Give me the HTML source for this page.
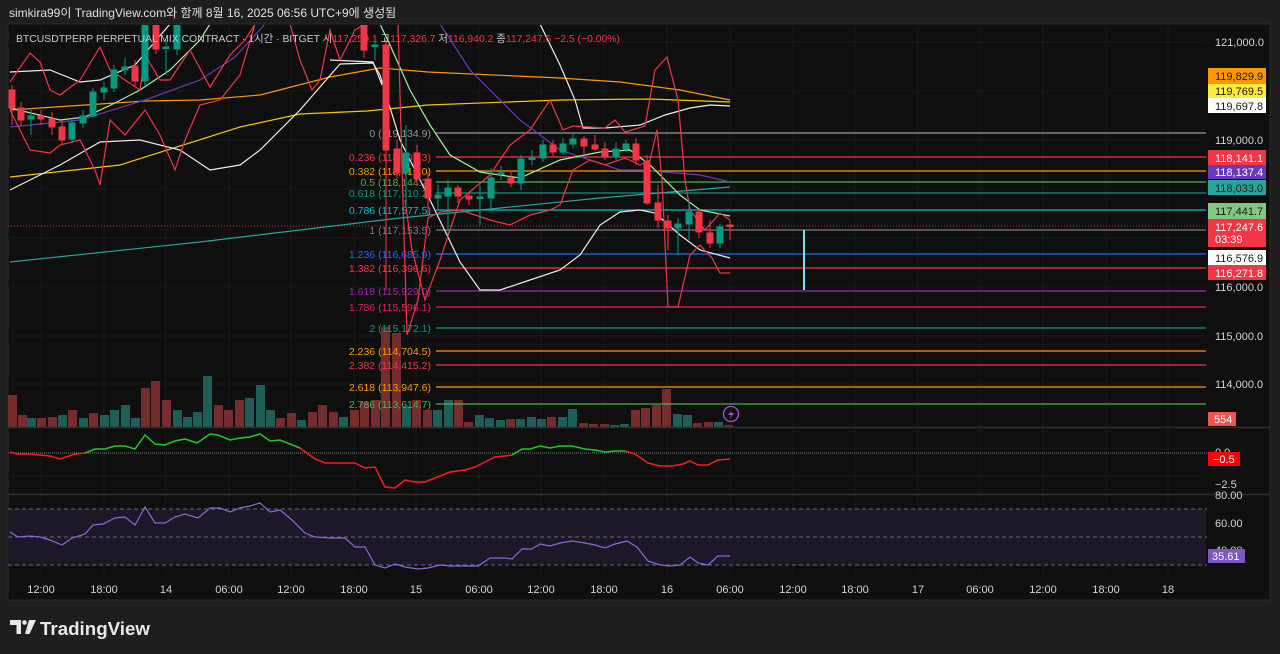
<!DOCTYPE html>
<html><head><meta charset="utf-8"><style>
html,body{margin:0;padding:0;background:#1e1e1e;width:1280px;height:654px;overflow:hidden;font-family:"Liberation Sans","Noto Sans CJK KR",sans-serif}
svg{position:absolute;left:0;top:0}
</style></head><body>
<svg width="1280" height="654" viewBox="0 0 1280 654" font-family="Liberation Sans, Noto Sans CJK KR, sans-serif">
<rect width="1280" height="654" fill="#1e1e1e"/>
<text x="9" y="17" fill="#e0e0e0" font-size="12">simkira99이 TradingView.com와 함께 8월 16, 2025 06:56 UTC+9에 생성됨</text>
<rect x="8" y="24" width="1262" height="576" fill="#0f0f0f" stroke="#2a2a2a"/>
<g stroke="#1a1a1a" stroke-width="1">
<line x1="8" y1="42" x2="1205" y2="42"/><line x1="8" y1="91" x2="1205" y2="91"/><line x1="8" y1="140" x2="1205" y2="140"/><line x1="8" y1="189" x2="1205" y2="189"/><line x1="8" y1="238" x2="1205" y2="238"/><line x1="8" y1="287" x2="1205" y2="287"/><line x1="8" y1="336" x2="1205" y2="336"/><line x1="8" y1="384" x2="1205" y2="384"/>
<line x1="8" y1="476" x2="1205" y2="476"/><line x1="8" y1="523" x2="1205" y2="523"/><line x1="8" y1="550" x2="1205" y2="550"/>
<line x1="41" y1="24" x2="41" y2="575"/><line x1="104" y1="24" x2="104" y2="575"/><line x1="166" y1="24" x2="166" y2="575"/><line x1="229" y1="24" x2="229" y2="575"/><line x1="291" y1="24" x2="291" y2="575"/><line x1="354" y1="24" x2="354" y2="575"/><line x1="416" y1="24" x2="416" y2="575"/><line x1="479" y1="24" x2="479" y2="575"/><line x1="541" y1="24" x2="541" y2="575"/><line x1="604" y1="24" x2="604" y2="575"/><line x1="667" y1="24" x2="667" y2="575"/><line x1="730" y1="24" x2="730" y2="575"/><line x1="793" y1="24" x2="793" y2="575"/><line x1="855" y1="24" x2="855" y2="575"/><line x1="918" y1="24" x2="918" y2="575"/><line x1="980" y1="24" x2="980" y2="575"/><line x1="1043" y1="24" x2="1043" y2="575"/><line x1="1106" y1="24" x2="1106" y2="575"/><line x1="1168" y1="24" x2="1168" y2="575"/>
</g>
<defs><clipPath id="main"><rect x="8" y="25" width="1198" height="402"/></clipPath></defs>
<g clip-path="url(#main)">
<g fill="#7a2e2e" opacity="0.95">
<rect x="8" y="395" width="9" height="32"/><rect x="18" y="415" width="9" height="12"/><rect x="37" y="418" width="9" height="9"/><rect x="48" y="417" width="9" height="10"/><rect x="68" y="410" width="9" height="17"/><rect x="89" y="413" width="9" height="14"/><rect x="141" y="388" width="9" height="39"/><rect x="151" y="381" width="9" height="46"/><rect x="162" y="400" width="9" height="27"/><rect x="214" y="405" width="9" height="22"/><rect x="224" y="410" width="9" height="17"/><rect x="235" y="400" width="9" height="27"/><rect x="276" y="418" width="9" height="9"/><rect x="287" y="413" width="9" height="14"/><rect x="308" y="412" width="9" height="15"/><rect x="318" y="405" width="9" height="22"/><rect x="329" y="412" width="9" height="15"/><rect x="350" y="410" width="9" height="17"/><rect x="360" y="402" width="9" height="25"/><rect x="371" y="400" width="9" height="27"/><rect x="381" y="327" width="9" height="100"/><rect x="392" y="333" width="9" height="94"/><rect x="412" y="400" width="9" height="27"/><rect x="423" y="410" width="9" height="17"/><rect x="454" y="400" width="9" height="27"/><rect x="464" y="422" width="9" height="5"/><rect x="506" y="419" width="9" height="8"/><rect x="547" y="417" width="9" height="10"/><rect x="579" y="423" width="9" height="4"/><rect x="589" y="424" width="9" height="3"/><rect x="600" y="424" width="9" height="3"/><rect x="631" y="410" width="9" height="17"/><rect x="641" y="408" width="9" height="19"/><rect x="652" y="405" width="9" height="22"/><rect x="662" y="389" width="9" height="38"/><rect x="693" y="423" width="9" height="4"/><rect x="704" y="422" width="9" height="5"/><rect x="724" y="425" width="9" height="2"/>
</g>
<g fill="#1d5e58">
<rect x="27" y="418" width="9" height="9"/><rect x="58" y="415" width="9" height="12"/><rect x="79" y="418" width="9" height="9"/><rect x="100" y="415" width="9" height="12"/><rect x="110" y="410" width="9" height="17"/><rect x="121" y="405" width="9" height="22"/><rect x="131" y="418" width="9" height="9"/><rect x="173" y="410" width="9" height="17"/><rect x="183" y="417" width="9" height="10"/><rect x="193" y="412" width="9" height="15"/><rect x="203" y="376" width="9" height="51"/><rect x="245" y="398" width="9" height="29"/><rect x="256" y="385" width="9" height="42"/><rect x="266" y="410" width="9" height="17"/><rect x="297" y="420" width="9" height="7"/><rect x="339" y="417" width="9" height="10"/><rect x="402" y="406" width="9" height="21"/><rect x="433" y="410" width="9" height="17"/><rect x="444" y="400" width="9" height="27"/><rect x="475" y="415" width="9" height="12"/><rect x="485" y="418" width="9" height="9"/><rect x="496" y="420" width="9" height="7"/><rect x="516" y="419" width="9" height="8"/><rect x="527" y="417" width="9" height="10"/><rect x="537" y="419" width="9" height="8"/><rect x="558" y="417" width="9" height="10"/><rect x="568" y="409" width="9" height="18"/><rect x="610" y="425" width="9" height="2"/><rect x="620" y="424" width="9" height="3"/><rect x="673" y="414" width="9" height="13"/><rect x="683" y="415" width="9" height="12"/><rect x="714" y="422" width="9" height="5"/>
</g>
<g stroke-width="1.3">
<line x1="436" y1="133" x2="1207" y2="133" stroke="#9598a1"/>
<line x1="436" y1="157" x2="1207" y2="157" stroke="#f23645"/>
<line x1="436" y1="171" x2="1207" y2="171" stroke="#ff9800"/>
<line x1="436" y1="182" x2="1207" y2="182" stroke="#4caf50"/>
<line x1="436" y1="193" x2="1207" y2="193" stroke="#089981"/>
<line x1="436" y1="210" x2="1207" y2="210" stroke="#00bcd4"/>
<line x1="436" y1="230" x2="1207" y2="230" stroke="#787b86"/>
<line x1="436" y1="254" x2="1207" y2="254" stroke="#2962ff"/>
<line x1="436" y1="268" x2="1207" y2="268" stroke="#f23645"/>
<line x1="436" y1="291" x2="1207" y2="291" stroke="#9c27b0"/>
<line x1="436" y1="307" x2="1207" y2="307" stroke="#e91e63"/>
<line x1="436" y1="328" x2="1207" y2="328" stroke="#089981"/>
<line x1="436" y1="351" x2="1207" y2="351" stroke="#ff9800"/>
<line x1="436" y1="365" x2="1207" y2="365" stroke="#f23645"/>
<line x1="436" y1="387" x2="1207" y2="387" stroke="#ff9800"/>
<line x1="436" y1="404" x2="1207" y2="404" stroke="#4caf50"/>
</g>
<g font-size="10.5" text-anchor="end">
<text x="431" y="137" fill="#9598a1">0 (119,134.9)</text>
<text x="431" y="161" fill="#f23645">0.236 (118,693.3)</text>
<text x="431" y="175" fill="#ff9800">0.382 (118,419.0)</text>
<text x="431" y="186" fill="#4caf50">0.5 (118,144.2)</text>
<text x="431" y="197" fill="#089981">0.618 (117,910.2)</text>
<text x="431" y="214" fill="#00bcd4">0.786 (117,577.5)</text>
<text x="431" y="234" fill="#787b86">1 (117,153.5)</text>
<text x="431" y="258" fill="#2962ff">1.236 (116,685.9)</text>
<text x="431" y="272" fill="#f23645">1.382 (116,396.6)</text>
<text x="431" y="295" fill="#9c27b0">1.618 (115,929.0)</text>
<text x="431" y="311" fill="#e91e63">1.786 (115,596.1)</text>
<text x="431" y="332" fill="#089981">2 (115,172.1)</text>
<text x="431" y="355" fill="#ff9800">2.236 (114,704.5)</text>
<text x="431" y="369" fill="#f23645">2.382 (114,415.2)</text>
<text x="431" y="391" fill="#ff9800">2.618 (113,947.6)</text>
<text x="431" y="408" fill="#4caf50">2.786 (113,614.7)</text>
</g>
<line x1="8" y1="226" x2="1207" y2="226" stroke="#f23645" stroke-dasharray="1 2" opacity="0.8"/>
<line x1="804" y1="230" x2="804" y2="290" stroke="#80deea" stroke-width="2"/>
<g fill="none" stroke-width="1.2">
<polyline stroke="#26a69a" points="10,262 200,242 400,218 600,198 730,187"/>
<polyline stroke="#f7c600" points="10,177 120,165 240,127 300,114 367,111 428,105 560,100 650,99 730,102"/>
<polyline stroke="#ff9800" points="10,110 145,101 200,100 260,95 330,77 380,68 428,72 560,78 620,82 680,90 730,100"/>
<polyline stroke="#673ab7" points="10,127 80,120 145,100 200,80 235,57 265,24 440,24 470,70 520,120 560,150 620,170 640,170 700,175 730,182"/>
<polyline stroke="#a5f3a0" points="10,108 60,120 85,117 115,103 140,90 170,70 200,40 210,24 380,24 390,45 410,90 430,125 450,155 480,172 520,178 560,160 600,152 630,150 650,165 680,195 700,210 730,216"/>
<polyline stroke="#ececec" points="10,72 50,70 80,82 100,80 135,65 170,24"/>
<polyline stroke="#ececec" points="330,60 373,62 382,85"/>
<polyline stroke="#ececec" points="540,24 560,65 575,100 583,128 605,128 640,125 665,115 690,108 710,105 730,106"/>
<polyline stroke="#ececec" points="10,190 60,165 100,142 140,140 180,150 210,170 240,165 260,150 300,110 340,64 373,63 380,75 400,140 430,200 460,262 480,290 500,290 530,280 560,270 580,255 600,225 620,212 640,210 655,213 680,235 700,250 730,258"/>
<polyline stroke="#f23645" points="10,82 30,53 40,62 50,90 60,95 80,80 100,47 110,70 140,90 145,55 160,80 170,80 190,50 210,87 230,55 245,40 255,24"/>
<polyline stroke="#f23645" points="10,110 30,150 50,153 60,145 80,140 95,170 100,185 110,120 125,135 145,110 160,135 175,170 185,140 200,105 220,100 240,75 255,24"/>
<polyline stroke="#f23645" points="290,24 300,60 312,90 320,80 330,30 340,60 355,30 365,24"/>
<polyline stroke="#f23645" points="398,24 403,200 407,335 418,300 428,218 440,212 460,210 490,220 510,225 530,215 550,210 560,205 573,170 590,160 605,165 625,158 640,165 650,160 657,130 662,180 668,307 678,307 690,255 700,245 712,258 720,273 730,273"/>
<polyline stroke="#f23645" points="405,200 412,250 425,300 440,260 460,200 490,175 510,145 530,130 550,100 563,130 573,126 605,128 615,120 625,132 645,126 655,70 667,57 678,100 685,180 690,210 705,230 720,213 730,220"/>
</g>
<g stroke-width="1">
<g fill="#f23645" stroke="#f23645">
<line x1="12" y1="85" x2="12" y2="125"/><rect x="9" y="90" width="6" height="18"/>
<line x1="21" y1="102" x2="21" y2="126"/><rect x="18" y="108" width="6" height="12"/>
<line x1="41" y1="110" x2="41" y2="125"/><rect x="38" y="116" width="6" height="3"/>
<line x1="52" y1="112" x2="52" y2="135"/><rect x="49" y="119" width="6" height="8"/>
<line x1="62" y1="120" x2="62" y2="145"/><rect x="59" y="127" width="6" height="13"/>
<line x1="135" y1="60" x2="135" y2="86"/><rect x="132" y="66" width="6" height="15"/>
<line x1="156" y1="20" x2="156" y2="54"/><rect x="153" y="23" width="6" height="26"/>
<line x1="364" y1="20" x2="364" y2="58"/><rect x="361" y="23" width="6" height="27"/>
<line x1="386" y1="40" x2="386" y2="290"/><rect x="383" y="45" width="6" height="105"/>
<line x1="397" y1="140" x2="397" y2="180"/><rect x="394" y="149" width="6" height="24"/>
<line x1="417" y1="145" x2="417" y2="185"/><rect x="414" y="153" width="6" height="26"/>
<line x1="428" y1="172" x2="428" y2="215"/><rect x="425" y="179" width="6" height="19"/>
<line x1="458" y1="185" x2="458" y2="203"/><rect x="455" y="188" width="6" height="8"/>
<line x1="469" y1="192" x2="469" y2="205"/><rect x="466" y="196" width="6" height="3"/>
<line x1="511" y1="172" x2="511" y2="187"/><rect x="508" y="178" width="6" height="5"/>
<line x1="553" y1="140" x2="553" y2="156"/><rect x="550" y="145" width="6" height="7"/>
<line x1="584" y1="136" x2="584" y2="155"/><rect x="581" y="139" width="6" height="7"/>
<line x1="595" y1="135" x2="595" y2="151"/><rect x="592" y="145" width="6" height="4"/>
<line x1="605" y1="142" x2="605" y2="160"/><rect x="602" y="149" width="6" height="8"/>
<line x1="636" y1="138" x2="636" y2="165"/><rect x="633" y="144" width="6" height="16"/>
<line x1="647" y1="155" x2="647" y2="205"/><rect x="644" y="161" width="6" height="42"/>
<line x1="658" y1="185" x2="658" y2="228"/><rect x="655" y="203" width="6" height="17"/>
<line x1="668" y1="215" x2="668" y2="250"/><rect x="665" y="221" width="6" height="7"/>
<line x1="699" y1="208" x2="699" y2="238"/><rect x="696" y="212" width="6" height="20"/>
<line x1="710" y1="220" x2="710" y2="248"/><rect x="707" y="233" width="6" height="10"/>
<line x1="730" y1="220" x2="730" y2="240"/><rect x="727" y="225" width="6" height="1.5"/>
</g>
<g fill="#089981" stroke="#089981">
<line x1="31" y1="108" x2="31" y2="135"/><rect x="28" y="116" width="6" height="3"/>
<line x1="72" y1="118" x2="72" y2="143"/><rect x="69" y="123" width="6" height="16"/>
<line x1="83" y1="110" x2="83" y2="128"/><rect x="80" y="116" width="6" height="7"/>
<line x1="93" y1="88" x2="93" y2="118"/><rect x="90" y="92" width="6" height="24"/>
<line x1="104" y1="82" x2="104" y2="100"/><rect x="101" y="88" width="6" height="4"/>
<line x1="114" y1="65" x2="114" y2="92"/><rect x="111" y="70" width="6" height="18"/>
<line x1="125" y1="58" x2="125" y2="75"/><rect x="122" y="67" width="6" height="3"/>
<line x1="145" y1="20" x2="145" y2="86"/><rect x="142" y="23" width="6" height="58"/>
<line x1="166" y1="40" x2="166" y2="75"/><rect x="163" y="47" width="6" height="1.5"/>
<line x1="177" y1="20" x2="177" y2="55"/><rect x="174" y="23" width="6" height="26"/>
<line x1="375" y1="35" x2="375" y2="60"/><rect x="372" y="45" width="6" height="1.5"/>
<line x1="406" y1="125" x2="406" y2="208"/><rect x="403" y="153" width="6" height="20"/>
<line x1="438" y1="185" x2="438" y2="210"/><rect x="435" y="195" width="6" height="3"/>
<line x1="448" y1="180" x2="448" y2="235"/><rect x="445" y="188" width="6" height="8"/>
<line x1="480" y1="185" x2="480" y2="225"/><rect x="477" y="197" width="6" height="1.5"/>
<line x1="491" y1="168" x2="491" y2="208"/><rect x="488" y="178" width="6" height="20"/>
<line x1="501" y1="166" x2="501" y2="180"/><rect x="498" y="173" width="6" height="1.5"/>
<line x1="521" y1="155" x2="521" y2="190"/><rect x="518" y="159" width="6" height="24"/>
<line x1="532" y1="150" x2="532" y2="165"/><rect x="529" y="158" width="6" height="1.5"/>
<line x1="543" y1="140" x2="543" y2="162"/><rect x="540" y="145" width="6" height="13"/>
<line x1="563" y1="138" x2="563" y2="155"/><rect x="560" y="144" width="6" height="8"/>
<line x1="573" y1="132" x2="573" y2="148"/><rect x="570" y="139" width="6" height="5"/>
<line x1="616" y1="142" x2="616" y2="160"/><rect x="613" y="149" width="6" height="8"/>
<line x1="626" y1="140" x2="626" y2="152"/><rect x="623" y="144" width="6" height="5"/>
<line x1="678" y1="218" x2="678" y2="255"/><rect x="675" y="224" width="6" height="4"/>
<line x1="689" y1="200" x2="689" y2="240"/><rect x="686" y="212" width="6" height="12"/>
<line x1="720" y1="224" x2="720" y2="248"/><rect x="717" y="227" width="6" height="16"/>
</g>
</g>
<circle cx="731" cy="414" r="7.5" fill="none" stroke="#b04ce0" stroke-width="1.3"/>
<path d="M733,409 L728,415 L731.5,415 L729,420 L734,413 L730.5,413 Z" fill="#b04ce0"/>
</g>
<text x="16" y="42" font-size="10.5" fill="#c8cad0" textLength="604" lengthAdjust="spacingAndGlyphs">BTCUSDTPERP PERPETUAL MIX CONTRACT · 1시간 · BITGET  시<tspan fill="#f23645">117,250.1</tspan> 고<tspan fill="#f23645">117,326.7</tspan> 저<tspan fill="#f23645">116,940.2</tspan> 종<tspan fill="#f23645">117,247.6 −2.5 (−0.00%)</tspan></text>
<line x1="8" y1="427.5" x2="1270" y2="427.5" stroke="#2f2f2f" stroke-width="1.5"/>
<line x1="8" y1="494.5" x2="1270" y2="494.5" stroke="#2f2f2f" stroke-width="1.5"/>
<line x1="8" y1="453" x2="1207" y2="453" stroke="#787b86" stroke-dasharray="1 1"/>
<polyline fill="none" stroke="#ff1a1a" stroke-width="1.5" points="10,452 17,454 30,454 50,456 60,459 75,454 85,453"/>
<polyline fill="none" stroke="#22c922" stroke-width="1.5" points="85,453 95,449 105,449 115,446 125,446 135,449 145,435 155,444 165,445 175,441 185,439 197,443 210,434 218,435 230,440 240,438 250,437 260,434 270,441 280,440 300,448"/>
<polyline fill="none" stroke="#ff1a1a" stroke-width="1.5" points="300,448 315,459 325,463 340,463 355,463 365,468 375,467 385,487 395,488 405,480 415,482 425,482 440,476 450,472 465,470 475,467 485,462 495,457 505,456 512,455"/>
<polyline fill="none" stroke="#22c922" stroke-width="1.5" points="512,455 522,449 530,449 540,446 550,448 560,446 572,446 585,449 595,450 605,452 615,451 625,451"/>
<polyline fill="none" stroke="#ff1a1a" stroke-width="1.5" points="625,451 635,454 648,463 660,466 672,466 683,464 690,461 698,465 708,465 718,460 730,459"/>
<rect x="8" y="509" width="1198" height="56" fill="#1c1828"/>
<g stroke="#6b6b78" stroke-dasharray="4 3"><line x1="8" y1="509" x2="1207" y2="509"/><line x1="8" y1="537" x2="1207" y2="537"/><line x1="8" y1="565" x2="1207" y2="565"/></g>
<polyline fill="none" stroke="#8e67d6" stroke-width="1.2" points="10,532 18,537 30,536 40,537 50,540 62,545 72,538 85,534 93,525 103,524 115,518 125,517 135,525 145,507 155,523 165,523 175,517 185,514 198,518 210,508 220,508 230,512 240,508 250,506 260,503 270,512 280,510 292,520 305,533 315,537 330,538 345,538 355,547 365,547 375,565 385,568 395,564 405,567 418,569 428,568 440,565 450,566 465,566 478,566 490,558 505,558 512,559 522,549 532,549 540,544 550,546 560,543 572,541 585,543 595,545 605,548 615,544 627,541 637,547 648,561 660,565 670,566 680,565 690,557 698,563 708,565 718,556 730,556"/>
<g font-size="11" fill="#d1d4dc" text-anchor="middle">
<text x="41" y="593">12:00</text><text x="104" y="593">18:00</text><text x="166" y="593">14</text><text x="229" y="593">06:00</text><text x="291" y="593">12:00</text><text x="354" y="593">18:00</text><text x="416" y="593">15</text><text x="479" y="593">06:00</text><text x="541" y="593">12:00</text><text x="604" y="593">18:00</text><text x="667" y="593">16</text><text x="730" y="593">06:00</text><text x="793" y="593">12:00</text><text x="855" y="593">18:00</text><text x="918" y="593">17</text><text x="980" y="593">06:00</text><text x="1043" y="593">12:00</text><text x="1106" y="593">18:00</text><text x="1168" y="593">18</text>
</g>
<g font-size="11" fill="#d1d4dc">
<text x="1215" y="46">121,000.0</text><text x="1215" y="144">119,000.0</text><text x="1215" y="291">116,000.0</text><text x="1215" y="340">115,000.0</text><text x="1215" y="388">114,000.0</text>
<text x="1215" y="456">0.0</text><text x="1215" y="488">−2.5</text>
<text x="1215" y="499">80.00</text><text x="1215" y="527">60.00</text><text x="1215" y="554">40.00</text>
</g>
<g font-size="11">
<rect x="1208" y="68" width="58" height="16" fill="#ff9800"/><text x="1215" y="80" fill="#1a1a1a">119,829.9</text>
<rect x="1208" y="84" width="58" height="14" fill="#ffeb3b"/><text x="1215" y="95" fill="#1a1a1a">119,769.5</text>
<rect x="1208" y="98" width="58" height="15" fill="#ffffff"/><text x="1215" y="110" fill="#1a1a1a">119,697.8</text>
<rect x="1208" y="150" width="58" height="15" fill="#f23645"/><text x="1215" y="162" fill="#fff">118,141.1</text>
<rect x="1208" y="165" width="58" height="14" fill="#673ab7"/><text x="1215" y="176" fill="#fff">118,137.4</text>
<rect x="1208" y="180" width="58" height="15" fill="#26a69a"/><text x="1215" y="192" fill="#1a1a1a">118,033.0</text>
<rect x="1208" y="203" width="58" height="16" fill="#81c784"/><text x="1215" y="215" fill="#1a1a1a">117,441.7</text>
<rect x="1208" y="219" width="58" height="28" fill="#f23645"/><text x="1215" y="231" fill="#fff">117,247.6</text><text x="1215" y="243" fill="#fff">03:39</text>
<rect x="1208" y="250" width="58" height="15" fill="#ffffff"/><text x="1215" y="262" fill="#1a1a1a">116,576.9</text>
<rect x="1208" y="265" width="58" height="15" fill="#f23645"/><text x="1215" y="277" fill="#fff">116,271.8</text>
<rect x="1208" y="412" width="28" height="14" fill="#ef5350"/><text x="1214" y="423" fill="#fff">554</text>
<rect x="1208" y="452" width="32" height="14" fill="#ff0000"/><text x="1213" y="463" fill="#fff">−0.5</text>
<rect x="1208" y="549" width="37" height="14" fill="#7e57c2"/><text x="1212" y="560" fill="#fff">35.61</text>
</g>
<g fill="#e8e8e8">
<path d="M10,620 h11 v14 h-4.5 v-9 h-6.5 z"/>
<circle cx="24.5" cy="622.5" r="2.3"/>
<path d="M29,620 h7 l-6.5,14 h-4.5 z"/>
</g>
<text x="40" y="635" font-size="18.5" font-weight="bold" fill="#e8e8e8" textLength="110" lengthAdjust="spacingAndGlyphs">TradingView</text>
</svg>
</body></html>
